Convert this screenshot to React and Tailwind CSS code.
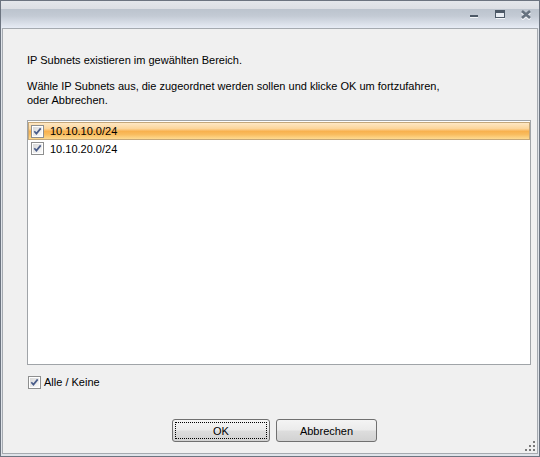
import React from "react";

function Check() {
  return (
    <svg width="13" height="13" viewBox="0 0 13 13" className="shrink-0">
      <defs>
        <linearGradient id="cbg" x1="0" y1="0" x2="1" y2="1">
          <stop offset="0" stopColor="#d8d8d8" />
          <stop offset="1" stopColor="#fbfbfb" />
        </linearGradient>
      </defs>
      <rect x="0.5" y="0.5" width="12" height="12" fill="#fff" stroke="#8e8f8f" />
      <rect x="2" y="2" width="9" height="9" fill="url(#cbg)" />
      <path d="M3.3 6.3 L5.4 8.6 L9.7 3.4" fill="none" stroke="#4a5d8a" strokeWidth="1.7" />
    </svg>
  );
}

export default function App() {
  const font = { fontFamily: '"Liberation Sans", Arial, sans-serif' };
  return (
    <div
      className="w-[540px] h-[457px] border border-[#6c7480] bg-[#dfe3e9] flex flex-col text-[11px] text-black leading-[14px]"
      style={font}
    >
      <div className="h-[27px] shrink-0 bg-[linear-gradient(to_bottom,#e4e7eb_0%,#dcdfe4_28%,#bcc4ce_31%,#c3cad4_55%,#e7ecf5_100%)] flex items-start justify-end pr-[8px]">
        <svg width="8" height="4" viewBox="0 0 8 4" className="mt-[13px]">
          <rect x="0" y="1" width="8" height="2" fill="#4d5967" />
          <rect x="0" y="3" width="8" height="1" fill="#f2f4f7" />
        </svg>
        <svg width="10" height="9" viewBox="0 0 10 9" className="mt-[9px] ml-[17px]">
          <rect x="0.5" y="0.5" width="9" height="7" fill="#e9edf3" stroke="#4d5967" />
          <rect x="0" y="0" width="10" height="3" fill="#4d5967" />
          <rect x="1" y="8" width="9" height="1" fill="#f2f4f7" />
        </svg>
        <svg width="10" height="10" viewBox="0 0 10 10" className="mt-[9px] ml-[16px]">
          <path d="M1 1.5 L9 8.5 M9 1.5 L1 8.5" stroke="#f2f4f7" strokeWidth="2.6" transform="translate(0 1)" />
          <path d="M1 1 L9 8 M9 1 L1 8" stroke="#66727f" strokeWidth="2.6" />
        </svg>
      </div>
      <div className="flex-1 mx-[1px] mb-[2px] border border-[#a5aab0] bg-[#f0f0f0] relative flex flex-col pl-[24px] pr-[6px] pt-[24px]">
        <div>IP Subnets existieren im gewählten Bereich.</div>
        <div className="mt-[12px]">
          Wähle IP Subnets aus, die zugeordnet werden sollen und klicke OK um fortzufahren,
          <br />
          oder Abbrechen.
        </div>
        <div className="mt-[13px] h-[245px] border border-[#a0a4a8] bg-white flex flex-col pt-[1px]">
          <div className="h-[18px] border border-[#c4a77a] bg-[linear-gradient(to_bottom,#fee8c4_0%,#fcd59b_35%,#f8b14e_52%,#f9bd60_72%,#fedb92_100%)] flex items-center pl-[2px]">
            <Check />
            <span className="ml-[6px]">10.10.10.0/24</span>
          </div>
          <div className="h-[17px] flex items-center pl-[3px]">
            <Check />
            <span className="ml-[6px]">10.10.20.0/24</span>
          </div>
        </div>
        <div className="mt-[10px] flex items-center ml-[1px]">
          <Check />
          <span className="ml-[3px]">Alle / Keine</span>
        </div>
        <div className="mt-[30px] flex justify-center gap-[6px] pr-[9px]">
          <button className="w-[98px] h-[23px] rounded-[3px] border border-[#707070] bg-[linear-gradient(to_bottom,#f4f4f4_0%,#ebebeb_48%,#dddddd_52%,#d2d2d2_100%)] p-[2px]">
            <div className="w-full h-full border border-dotted border-black flex items-center justify-center">OK</div>
          </button>
          <button className="w-[101px] h-[23px] rounded-[3px] border border-[#707070] bg-[linear-gradient(to_bottom,#f4f4f4_0%,#ebebeb_48%,#dddddd_52%,#d2d2d2_100%)] flex items-center justify-center">
            Abbrechen
          </button>
        </div>
        <div className="absolute right-[1px] bottom-[1px] w-[11px] h-[11px]">
          <div className="absolute left-[8px] top-[0px] w-[2px] h-[2px] bg-[#7a7a7a]" />
          <div className="absolute left-[4px] top-[4px] w-[2px] h-[2px] bg-[#7a7a7a]" />
          <div className="absolute left-[8px] top-[4px] w-[2px] h-[2px] bg-[#7a7a7a]" />
          <div className="absolute left-[0px] top-[8px] w-[2px] h-[2px] bg-[#7a7a7a]" />
          <div className="absolute left-[4px] top-[8px] w-[2px] h-[2px] bg-[#7a7a7a]" />
          <div className="absolute left-[8px] top-[8px] w-[2px] h-[2px] bg-[#7a7a7a]" />
        </div>
      </div>
    </div>
  );
}
